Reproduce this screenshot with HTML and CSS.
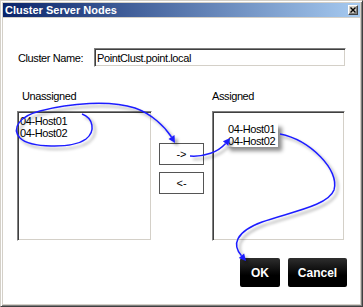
FILE: index.html
```html
<!DOCTYPE html>
<html lang="en">
<head>
    <meta charset="UTF-8">
    <meta name="viewport" content="width=device-width, initial-scale=1.0">
    <title>Cluster Server Nodes</title>
    <link rel="stylesheet" href="styles.css">
</head>
<body>
    <div class="window">
        <div class="titlebar">
            <span class="title">Cluster Server Nodes</span>
            <button class="close-btn" title="Close">
                <svg width="6" height="6" viewBox="0 0 6 6">
                    <path d="M0.5 0.5 L5.5 5.5 M5.5 0.5 L0.5 5.5" stroke="#000" stroke-width="1.4" fill="none"/>
                </svg>
            </button>
        </div>
        <div class="content">
            <div class="name-row">
                <label for="clusterName">Cluster Name:</label>
                <input id="clusterName" type="text" value="PointClust.point.local">
            </div>

            <div class="lists">
                <div class="list-label unassigned-label">Unassigned</div>
                <div></div>
                <div class="list-label">Assigned</div>

                <div class="listbox left-list">
                    <div class="item">04-Host01</div>
                    <div class="item">04-Host02</div>
                </div>
                <div class="move-buttons">
                    <button id="moveRight" class="move-btn">-&gt;</button>
                    <button id="moveLeft" class="move-btn">&lt;-</button>
                </div>
                <div class="listbox right-list">
                    <div class="picked">
                        <div class="item">04-Host01</div>
                        <div class="item">04-Host02</div>
                    </div>
                </div>
            </div>

            <div class="actions">
                <button id="okBtn" class="dark-btn ok-btn">OK</button>
                <button id="cancelBtn" class="dark-btn cancel-btn">Cancel</button>
            </div>
        </div>
    </div>

    <!-- hand drawn callouts over the dialog -->
    <svg class="annotations" width="363" height="307" viewBox="0 0 363 307">
        <defs>
            <filter id="soft" x="-20%" y="-20%" width="140%" height="140%">
                <feDropShadow dx="3" dy="3" stdDeviation="1.6" flood-color="#000" flood-opacity="0.35"/>
            </filter>
        </defs>
        <g filter="url(#soft)" stroke="#1f1fff" stroke-width="1.5" fill="none">
            <path d="M82 114 C93 118 96 131 86 139 C72 149 30 148 20 138 C11 128 20 116 40 111 C70 103 110 100 135 108 C152 114 165 127 171.5 137"/>
            <path d="M190 156 C205 157 218 152 225.6 143.5"/>
            <path d="M280 134 C310 140 340 170 334 190 C328 206 290 212 262 222 C235 232 232 245 241.5 255.7"/>
        </g>
        <g filter="url(#soft)" fill="#1f1fff">
            <polygon points="175,143 174.5,135 168.5,139"/>
            <polygon points="230,138 228.3,145.7 222.9,141.3"/>
            <polygon points="246,261 244.1,253.4 238.8,258"/>
        </g>
    </svg>
</body>
</html>
```

FILE: styles.css
```css
html, body {
    margin: 0;
    padding: 0;
}
body {
    position: relative;
    width: 363px;
    height: 307px;
    overflow: hidden;
    background-color: #fff;
    font-family: "Liberation Sans", Arial, sans-serif;
    font-size: 11px;
    color: #000;
}
.window {
    box-sizing: border-box;
    width: 363px;
    height: 307px;
    display: flex;
    flex-direction: column;
    padding: 2px;
    background-color: #d4d0c8;
    border: 1px solid;
    border-color: #d4d0c8 #404040 #404040 #d4d0c8;
    box-shadow: inset 1px 1px #fff, inset -1px -1px #808080;
}
.titlebar {
    height: 14px;
    display: flex;
    align-items: center;
    justify-content: space-between;
    padding-left: 2px;
    background: linear-gradient(to right, #0a246a, #a6caf0);
}
.title {
    color: #fff;
    font-weight: bold;
    font-size: 11px;
}
.close-btn {
    box-sizing: border-box;
    width: 10px;
    height: 10px;
    margin-right: 2px;
    padding: 0;
    display: flex;
    align-items: center;
    justify-content: center;
    background-color: #d4d0c8;
    border: 1px solid;
    border-color: #fff #404040 #404040 #fff;
    box-shadow: inset -1px -1px #808080;
}
.content {
    flex: 1;
    background-color: #fff;
    border-top: 1px solid #d4d0c8;
    letter-spacing: -0.4px;
}
.name-row {
    display: flex;
    align-items: center;
    margin-top: 30px;
    padding-left: 15px;
}
.name-row label {
    width: 76px;
}
.name-row input {
    box-sizing: border-box;
    width: 252px;
    height: 19px;
    padding: 0 2px;
    font: inherit;
    letter-spacing: inherit;
    border: 1px solid;
    border-color: #808080 #fff #fff #808080;
    box-shadow: inset 1px 1px #404040, inset -1px -1px #d4d0c8;
    outline: none;
}
.lists {
    display: grid;
    grid-template-columns: 142px 53px 133px;
    grid-template-rows: 13px 130px;
    row-gap: 8px;
    margin-top: 23px;
    padding-left: 14px;
}
.list-label {
    line-height: 13px;
}
.unassigned-label {
    padding-left: 5px;
}
.listbox {
    box-sizing: border-box;
    height: 130px;
    padding: 3px 2px;
    border: 1px solid;
    border-color: #808080 #fff #fff #808080;
    box-shadow: inset 1px 1px #404040, inset -1px -1px #d4d0c8;
}
.left-list {
    width: 135px;
}
.right-list {
    width: 133px;
}
.item {
    line-height: 12px;
}
.picked {
    display: inline-block;
    margin: 8px 0 0 11px;
    padding: 0 3px 0 2px;
    background-color: #fff;
    box-shadow: 4px 4px 4px rgba(0,0,0,0.45);
}
.move-buttons {
    display: flex;
    flex-direction: column;
    gap: 7px;
    padding-top: 32px;
}
.move-btn {
    box-sizing: border-box;
    width: 45px;
    height: 22px;
    padding: 0;
    font: inherit;
    letter-spacing: 0;
    background-color: #fff;
    border: 1px solid #555;
}
.actions {
    display: flex;
    justify-content: flex-end;
    gap: 8px;
    margin-top: 17px;
    padding-right: 13px;
}
.dark-btn {
    height: 29px;
    padding: 0;
    color: #fff;
    font-family: "Liberation Sans", Arial, sans-serif;
    font-size: 12px;
    font-weight: bold;
    letter-spacing: 0;
    background: linear-gradient(#2e2e2e, #000 60%);
    border: none;
    border-radius: 2px;
}
.ok-btn {
    width: 40px;
}
.cancel-btn {
    width: 59px;
}
.annotations {
    position: absolute;
    top: 0;
    left: 0;
    pointer-events: none;
}
```
